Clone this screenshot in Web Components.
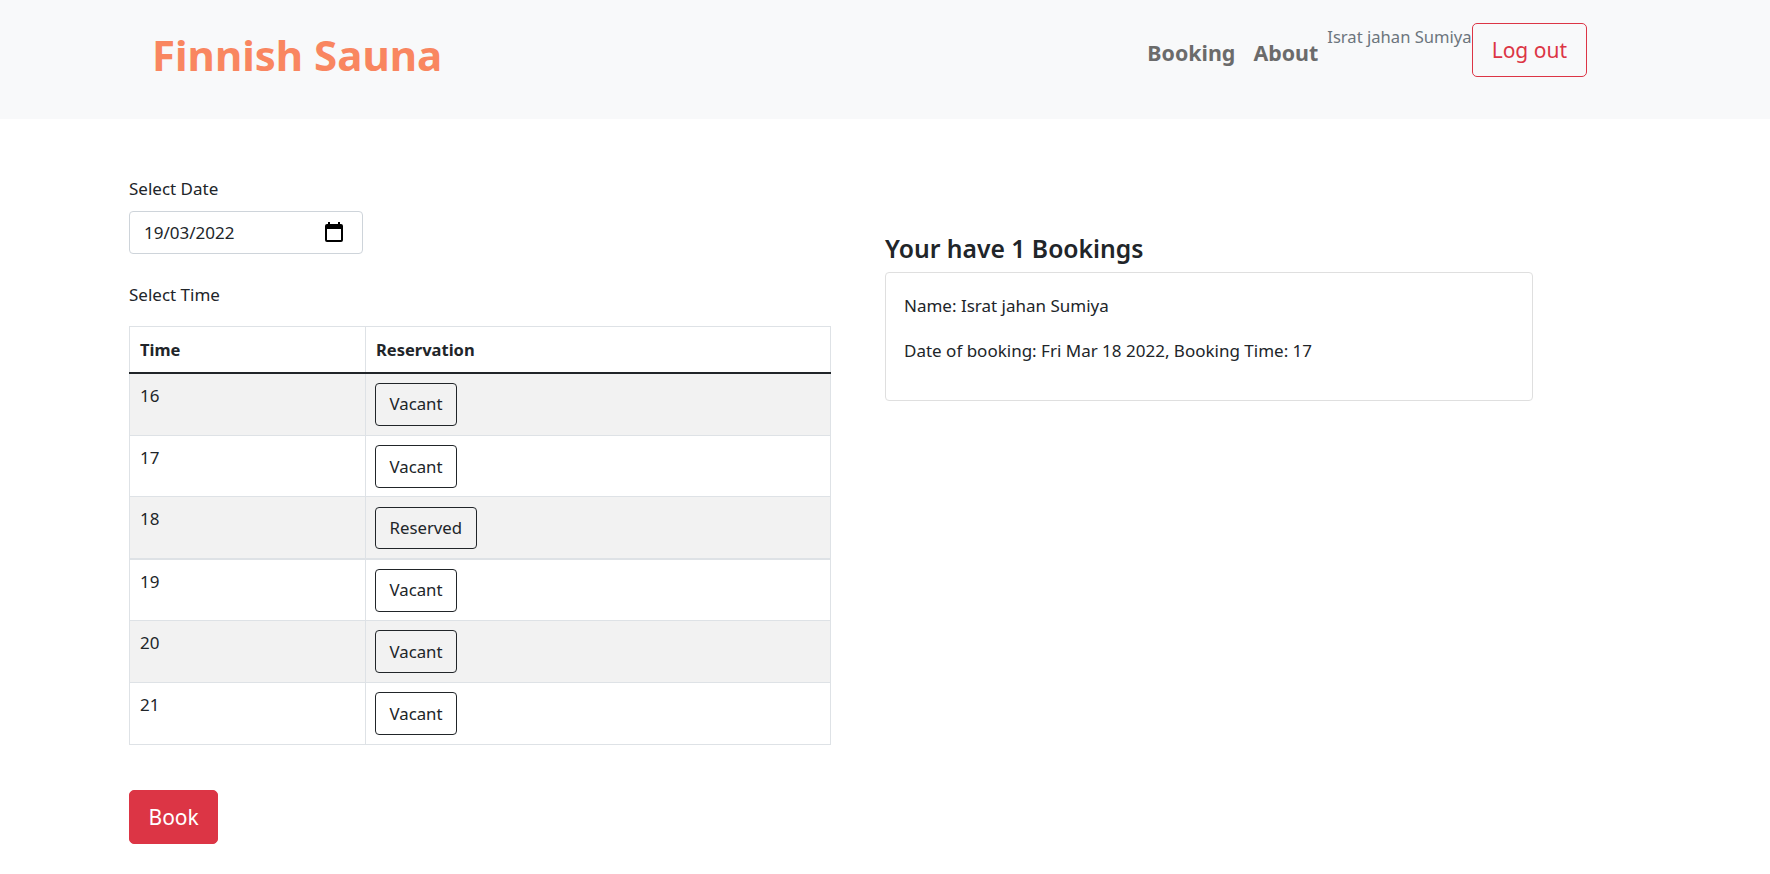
<!DOCTYPE html>
<html lang="en">
<head>
<meta charset="utf-8">
<title>Finnish Sauna</title>
<style>
  html, body { margin: 0; background: #fff; }
  body { font-family: "Noto Sans", "Open Sans", sans-serif; font-size: 17px; line-height: 24px; color: #212529; }
</style>
</head>
<body>
<sauna-navbar brand="Finnish Sauna" user="Israt jahan Sumiya"></sauna-navbar>
<sauna-page>
  <div slot="left">
    <date-field label="Select Date" value="19/03/2022"></date-field>
    <booking-table label="Select Time"></booking-table>
    <ds-btn variant="danger" size="lg" class="book">Book</ds-btn>
  </div>
  <div slot="right">
    <booking-list count="1">
      <p>Name: Israt jahan Sumiya</p>
      <p>Date of booking: Fri Mar 18 2022, Booking Time: 17</p>
    </booking-list>
  </div>
</sauna-page>

<script>
// Bouton générique
class DsBtn extends HTMLElement {
  constructor() {
    super();
    this.attachShadow({ mode: 'open' }).innerHTML = `
      <style>
        :host { display: inline-block; vertical-align: top; }
        button {
          font: inherit;
          font-size: 16.8px;
          color: #212529;
          background: transparent;
          border: 1px solid #212529;
          border-radius: 4px;
          height: 43px;
          padding: 0 13.5px;
          display: flex;
          align-items: center;
          cursor: pointer;
          white-space: nowrap;
        }
        :host([compact]) button { height: 42px; }
        :host([size="lg"]) button {
          font-size: 21px;
          height: 54px;
          border-radius: 5px;
          padding: 0 19px;
        }
        :host([variant="danger"]) button { background: #dc3545; border-color: #dc3545; color: #fff; padding: 0 18.5px; }
        :host([variant="outline-danger"]) button { color: #dc3545; border-color: #dc3545; }
      </style>
      <button type="button"><slot></slot></button>`;
  }
}
customElements.define('ds-btn', DsBtn);

class SaunaNavbar extends HTMLElement {
  constructor() {
    super();
    this.attachShadow({ mode: 'open' }).innerHTML = `
      <style>
        :host { display: flex; align-items: flex-start; height: 119px; background: #f8f9fa; padding: 0 183px 0 152px; }
        .brand { font-size: 42px; font-weight: 700; line-height: 60px; margin-top: 25px; color: #f98660; }
        nav { margin-left: auto; display: flex; align-items: flex-start; padding-top: 23px; }
        a { font-size: 21.4px; font-weight: 700; line-height: 30px; color: #6b6b6b; margin-top: 15px; margin-right: 18px; text-decoration: none; }
        a:nth-of-type(2) { margin-right: 9px; }
        .user { font-size: 16.6px; color: #6c757d; margin-top: 2px; line-height: 24px; }
      </style>
      <div class="brand"></div>
      <nav>
        <a href="#">Booking</a>
        <a href="#">About</a>
        <span class="user"></span>
        <ds-btn variant="outline-danger" size="lg">Log out</ds-btn>
      </nav>`;
    this.shadowRoot.querySelector('.brand').textContent = this.getAttribute('brand');
    this.shadowRoot.querySelector('.user').textContent = this.getAttribute('user');
  }
}
customElements.define('sauna-navbar', SaunaNavbar);

class SaunaPage extends HTMLElement {
  constructor() {
    super();
    this.attachShadow({ mode: 'open' }).innerHTML = `
      <style>
        :host { display: grid; grid-template-columns: 702px 648px; column-gap: 54px; padding: 58px 0 30px 129px; }
      </style>
      <slot name="left"></slot>
      <slot name="right"></slot>`;
  }
}
customElements.define('sauna-page', SaunaPage);

class DateField extends HTMLElement {
  constructor() {
    super();
    this.attachShadow({ mode: 'open' }).innerHTML = `
      <style>
        :host { display: block; }
        label { display: block; height: 24px; margin-bottom: 10px; }
        .input {
          box-sizing: border-box;
          width: 234px;
          height: 43px;
          border: 1px solid #ced4da;
          border-radius: 4px;
          padding: 0 19px 0 14px;
          display: flex;
          align-items: center;
          justify-content: space-between;
          background: #fff;
        }
        svg { display: block; margin-bottom: 2px; }
      </style>
      <label></label>
      <div class="input">
        <span class="value"></span>
        <svg width="18" height="20" viewBox="0 0 18 20" aria-hidden="true">
          <path fill="#000" fill-rule="evenodd" d="M3 0h2v2h8V0h2v2h1a2 2 0 0 1 2 2v14a2 2 0 0 1-2 2H2a2 2 0 0 1-2-2V4a2 2 0 0 1 2-2h1zM2 7v11h14V7z"/>
        </svg>
      </div>`;
    this.shadowRoot.querySelector('label').textContent = this.getAttribute('label');
    this.shadowRoot.querySelector('.value').textContent = this.getAttribute('value');
  }
}
customElements.define('date-field', DateField);

const SLOTS = [
  [16, 'Vacant'], [17, 'Vacant'], [18, 'Reserved'],
  [19, 'Vacant'], [20, 'Vacant'], [21, 'Vacant'],
];

class BookingTable extends HTMLElement {
  constructor() {
    super();
    const rows = SLOTS.map(([h, state]) => `
      <tr class="${state === 'Reserved' ? 'res' : ''}">
        <td>${h}</td>
        <td><ds-btn ${state === 'Reserved' ? 'compact' : ''}>${state}</ds-btn></td>
      </tr>`).join('');
    this.attachShadow({ mode: 'open' }).innerHTML = `
      <style>
        :host { display: block; margin-top: 29px; }
        .label { height: 24px; margin-bottom: 19px; }
        table { border-collapse: collapse; width: 702px; table-layout: fixed; }
        th, td { border: 1px solid #dee2e6; text-align: left; vertical-align: top; }
        th { font-size: 16.5px; font-weight: 700; height: 46px; box-sizing: border-box; padding: 11px 10px 9px; border-bottom: 2px solid #212529; }
        th:first-child { width: 236px; }
        td { height: 62px; box-sizing: border-box; padding: 9px 9px 0; }
        td:first-child { padding: 10px 10px 0; }
        tbody tr:nth-child(1) td { height: 63px; }
        tbody tr:nth-child(2) td { height: 61px; }
        tr.res td:last-child { padding-top: 10px; }
        tbody tr:nth-child(odd) td { background: #f2f2f2; }
        tr.res td { border-bottom-width: 2px; }
      </style>
      <div class="label"></div>
      <table>
        <thead><tr><th>Time</th><th>Reservation</th></tr></thead>
        <tbody>${rows}</tbody>
      </table>`;
    this.shadowRoot.querySelector('.label').textContent = this.getAttribute('label');
  }
}
customElements.define('booking-table', BookingTable);

class BookingList extends HTMLElement {
  constructor() {
    super();
    this.attachShadow({ mode: 'open' }).innerHTML = `
      <style>
        :host { display: block; padding-top: 54px; }
        h2 { font-size: 24.7px; font-weight: 600; line-height: 36px; margin: 0 0 5px; height: 36px; }
        .card {
          box-sizing: border-box;
          height: 129px;
          border: 1px solid #dfdfdf;
          border-radius: 4px;
          padding: 21px 18px 0;
        }
        ::slotted(p) { margin: 0 0 21px; line-height: 24px; }
      </style>
      <h2>Your have <span class="n"></span> Bookings</h2>
      <div class="card"><slot></slot></div>`;
    this.shadowRoot.querySelector('.n').textContent = this.getAttribute('count');
  }
}
customElements.define('booking-list', BookingList);
</script>
<style>
  .book { display: block; margin-top: 45px; width: max-content; }
</style>
</body>
</html>
